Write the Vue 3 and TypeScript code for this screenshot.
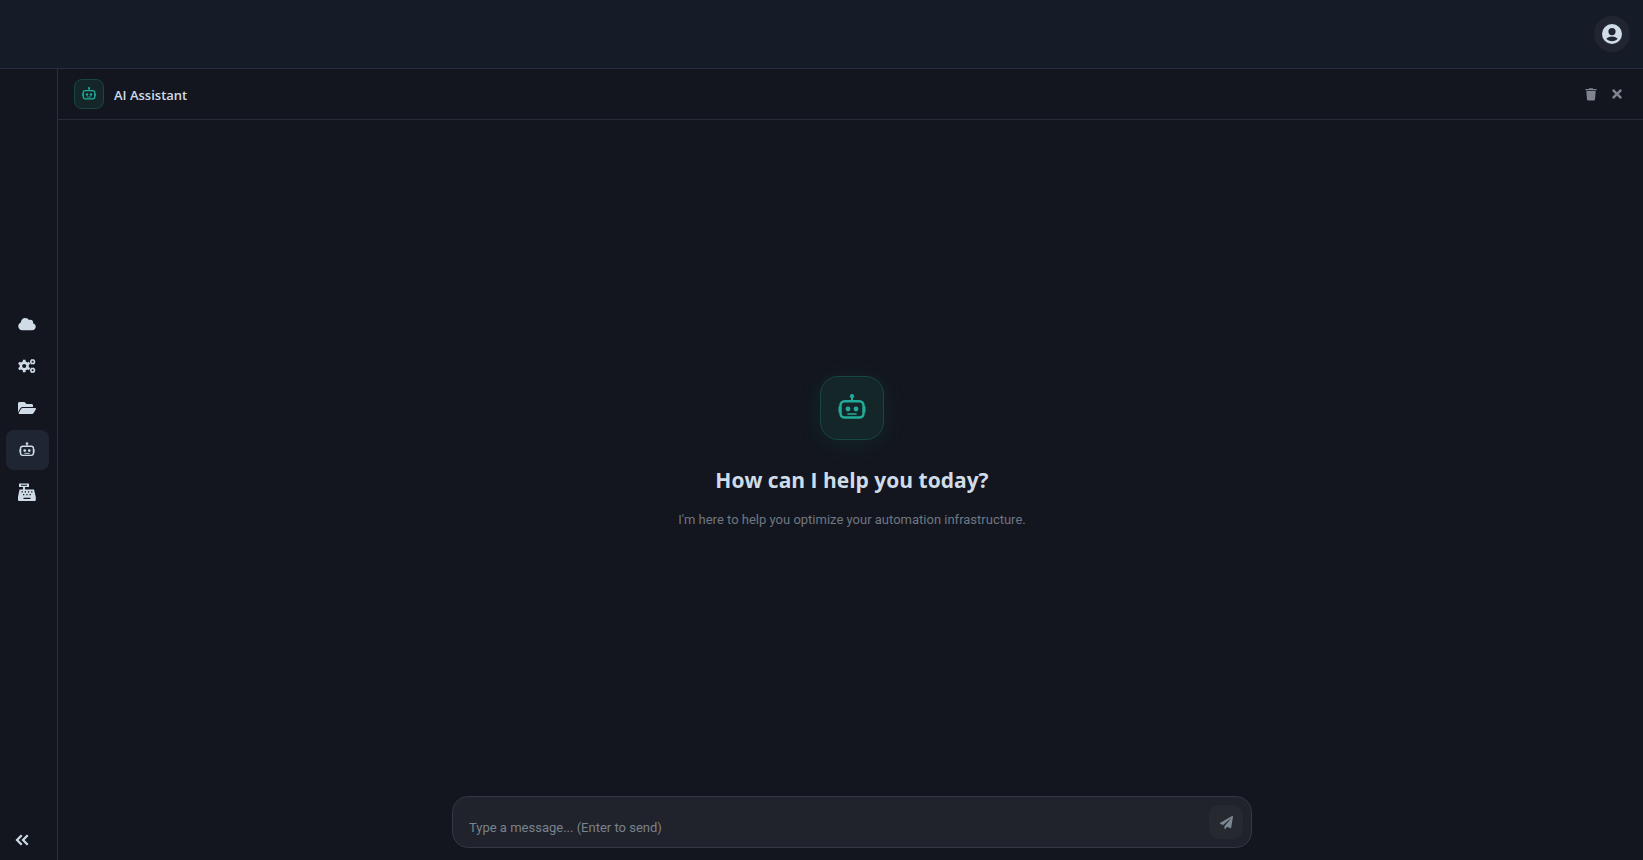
<script setup lang="ts">
import { ref } from 'vue'

type NavId = 'cloud' | 'automation' | 'files' | 'assistant' | 'terminal'

const items: { id: NavId; label: string }[] = [
  { id: 'cloud', label: 'Cloud' },
  { id: 'automation', label: 'Automation' },
  { id: 'files', label: 'Files' },
  { id: 'assistant', label: 'AI Assistant' },
  { id: 'terminal', label: 'Register' },
]

const active = ref<NavId>('assistant')
const message = ref('')

function send(): void {
  message.value = ''
}
</script>

<template>
  <div class="app">
    <svg class="defs" aria-hidden="true">
      <symbol id="robot" viewBox="0 0 32 32">
        <g fill="none" stroke="currentColor" stroke-linecap="round">
          <rect x="4.500" y="9.200" width="23" height="16.300" rx="4" stroke-width="2.500" />
          <path d="M16 9V5" stroke-width="2" />
          <path d="M12 22h8" stroke-width="1.600" />
        </g>
        <path d="M2.500 14.500h1.500v6h-1.500zM28 14.500h1.500v6H28z" fill="currentColor" />
        <circle cx="16" cy="4.200" r="2.100" fill="currentColor" />
        <circle cx="12" cy="17" r="2.400" fill="currentColor" />
        <circle cx="20" cy="17" r="2.400" fill="currentColor" />
      </symbol>
    </svg>

    <header class="topbar">
      <button class="avatar" type="button" aria-label="Account">
        <svg width="20" height="20" viewBox="0 0 20 20" aria-hidden="true">
          <path fill="currentColor" fill-rule="evenodd" d="M10 0a10 10 0 1 1 0 20 10 10 0 0 1 0-20zm0 4a3.600 3.600 0 1 0 0 7.200A3.600 3.600 0 0 0 10 4zm0 8.500c-2.500 0-5 1-5.600 2.300C5.500 16.300 7.600 17.200 10 17.200s4.500-.9 5.600-2.400c-.6-1.300-3.100-2.300-5.600-2.300z" />
        </svg>
      </button>
    </header>

    <div class="body">
      <aside class="sidebar">
        <nav class="nav" aria-label="Main">
          <button
            v-for="item in items"
            :key="item.id"
            type="button"
            class="nav-item"
            :class="{ active: active === item.id }"
            :aria-label="item.label"
            @click="active = item.id"
          >
            <svg v-if="item.id === 'cloud'" width="18" height="14" viewBox="0 0 640 512" fill="currentColor">
              <path d="M537.600 226.600c4.100-10.700 6.400-22.400 6.400-34.600 0-53-43-96-96-96-19.700 0-38.100 6-53.300 16.200C367 64.200 315.300 32 256 32c-88.400 0-160 71.600-160 160 0 2.700.1 5.400.2 8.100C40.200 219.800 0 273.200 0 336c0 79.500 64.500 144 144 144h368c70.700 0 128-57.300 128-128 0-61.900-44-113.600-102.400-125.400z" />
            </svg>
            <svg v-else-if="item.id === 'automation'" width="18" height="16" viewBox="0 0 18 16" fill="none" stroke="currentColor">
              <circle cx="6.200" cy="8" r="3.400" stroke-width="2.600" />
              <path stroke-width="2.700" d="M6.200 1.700v2.200M6.200 12.100v2.200M.75 4.850l1.900 1.100M9.750 10.050l1.900 1.100M.75 11.150l1.900-1.100M9.750 5.950l1.900-1.100" />
              <circle cx="14.600" cy="3.800" r="1.800" stroke-width="1.500" />
              <path stroke-width="1.500" d="M12 3.800h.9M16.300 3.800h.9M13.300 1.550l.4.700M15.500 5.350l.4.700M13.300 6.050l.4-.7M15.500 2.250l.4-.7" />
              <circle cx="14.600" cy="12.200" r="1.800" stroke-width="1.500" />
              <path stroke-width="1.500" d="M12 12.200h.9M16.300 12.200h.9M13.300 9.950l.4.700M15.500 13.750l.4.700M13.300 14.450l.4-.7M15.500 10.650l.4-.7" />
            </svg>
            <svg v-else-if="item.id === 'files'" width="18" height="16" viewBox="0 0 576 512" fill="currentColor">
              <path d="M572.694 292.093L500.270 416.248A63.997 63.997 0 0 1 444.989 448H45.025c-18.523 0-30.064-20.093-20.731-36.093l72.424-124.155A64 64 0 0 1 152 256h399.964c18.523 0 30.064 20.093 20.730 36.093zM152 224h328v-48c0-26.510-21.490-48-48-48H272l-64-64H48C21.490 64 0 85.490 0 112v278.046l69.077-118.418C86.214 242.250 117.989 224 152 224z" />
            </svg>
            <svg v-else-if="item.id === 'assistant'" width="18" height="18"><use href="#robot" /></svg>
            <svg v-else width="18" height="18" viewBox="0 0 18 18" fill="currentColor">
              <path fill-rule="evenodd" d="M1.500.500h9a.5.500 0 0 1 .5.500v3h-4v2.500h9l1.800 7.500v3a1 1 0 0 1-1 1H1a1 1 0 0 1-1-1v-3l1.500-7.500H5V4H1V1a.5.500 0 0 1 .5-.5zM3 1.800v.900h6v-.900zM3.500 8.300v1.200h1.300V8.300zM6.700 8.300v1.200H8V8.300zM9.900 8.300v1.200h1.300V8.300zM13.100 8.300v1.200h1.300V8.300zM5 11v1.200h1.300V11zM8.300 11v1.200h1.300V11zM11.600 11v1.200h1.300V11zM5.500 14.800V16h7v-1.200z" />
            </svg>
          </button>
        </nav>
        <button class="collapse" type="button" aria-label="Collapse sidebar">
          <svg width="14" height="12" viewBox="0 0 14 12" fill="none" stroke="currentColor" stroke-width="2.200" aria-hidden="true">
            <path d="M6.700 1.200L2 6l4.700 4.800M12.700 1.200L8 6l4.700 4.800" />
          </svg>
        </button>
      </aside>

      <main class="main">
        <div class="head">
          <span class="badge"><svg width="16" height="16" aria-hidden="true"><use href="#robot" /></svg></span>
          <h1>AI Assistant</h1>
          <div class="actions">
            <button type="button" aria-label="Clear conversation">
              <svg width="12" height="13" viewBox="0 0 12 13" aria-hidden="true">
                <path fill="currentColor" d="M.5 1h3.200L4.300.3h3.400l.6.700h3.200v1.300H.5zM1.300 3h9.400l-.7 8.600a1 1 0 0 1-1 .9H3a1 1 0 0 1-1-.9z" />
              </svg>
            </button>
            <button type="button" aria-label="Close">
              <svg width="10" height="14" viewBox="0 0 352 512" aria-hidden="true">
                <path fill="currentColor" d="M242.720 256l100.070-100.070c12.280-12.280 12.280-32.190 0-44.480l-22.240-22.240c-12.280-12.280-32.190-12.280-44.480 0L176 189.280 75.930 89.210c-12.280-12.280-32.190-12.280-44.480 0L9.210 111.450c-12.280 12.280-12.280 32.190 0 44.480L109.280 256 9.210 356.070c-12.280 12.280-12.280 32.190 0 44.480l22.240 22.240c12.280 12.280 32.200 12.280 44.480 0L176 322.720l100.070 100.070c12.280 12.280 32.200 12.280 44.480 0l22.240-22.240c12.280-12.280 12.280-32.190 0-44.480L242.720 256z" />
              </svg>
            </button>
          </div>
        </div>

        <section class="welcome">
          <span class="hero"><svg width="32" height="32" aria-hidden="true"><use href="#robot" /></svg></span>
          <h2>How can I help you today?</h2>
          <p>I'm here to help you optimize your automation infrastructure.</p>
        </section>

        <form class="composer" @submit.prevent="send">
          <div class="field">
            <textarea
              v-model="message"
              rows="1"
              aria-label="Message"
              placeholder="Type a message... (Enter to send)"
              @keydown.enter.exact.prevent="send"
            ></textarea>
            <button class="send" type="submit" aria-label="Send">
              <svg width="13" height="13" viewBox="0 0 512 512" aria-hidden="true">
                <path fill="currentColor" d="M476 3.200L12.500 270.600c-18.100 10.400-15.800 35.600 2.200 43.200L121 358.400l287.300-253.200c5.500-4.900 13.300 2.600 8.600 8.300L176 407v80.500c0 23.600 28.500 32.900 42.500 15.800L282 426l124.600 52.200c14.200 6 30.400-2.900 33-18.200l72-432C515 7.800 493.300-6.800 476 3.200z" />
              </svg>
            </button>
          </div>
        </form>
      </main>
    </div>
  </div>
</template>

<style>
body {
  margin: 0;
  background: #13161e;
}
</style>

<style scoped>
.app {
  display: flex;
  flex-direction: column;
  min-height: 100vh;
  background: #13161e;
  color: #cfdce8;
  font-family: 'Segoe UI', Roboto, 'Open Sans', sans-serif;
}

.defs {
  position: absolute;
  width: 0;
  height: 0;
}

button {
  display: flex;
  align-items: center;
  justify-content: center;
  padding: 0;
  border: 0;
  background: none;
  color: inherit;
  cursor: pointer;
}

.topbar {
  display: flex;
  align-items: center;
  justify-content: flex-end;
  height: 68px;
  padding: 0 13px;
  background: #161c27;
  border-bottom: 1px solid #262f3f;
}

.avatar {
  width: 36px;
  height: 36px;
  border-radius: 50%;
  background: #202531;
}

.body {
  display: flex;
  flex: 1;
}

.sidebar {
  display: flex;
  flex-direction: column;
  width: 57px;
  border-right: 1px solid #262f3f;
}

.nav {
  display: flex;
  flex: 1;
  flex-direction: column;
  justify-content: center;
  gap: 2px;
  padding: 0 8px 74px 6px;
}

.nav-item {
  height: 40px;
  padding-right: 2px;
  border-radius: 8px;
}

.nav-item.active {
  background: #1f2532;
}

.collapse {
  width: 44px;
  height: 40px;
}

.main {
  display: flex;
  flex: 1;
  flex-direction: column;
}

.head {
  display: flex;
  align-items: center;
  gap: 10px;
  height: 50px;
  padding: 0 14px 0 16px;
  border-bottom: 1px solid #262b38;
}

.badge,
.hero {
  display: flex;
  align-items: center;
  justify-content: center;
  box-sizing: border-box;
  border: 1px solid #17483f;
  background: #142627;
  color: #22aa9a;
}

.badge {
  width: 30px;
  height: 30px;
  border-radius: 8px;
}

h1,
h2 {
  font-family: 'Segoe UI', 'Open Sans', sans-serif;
}

h1 {
  flex: 1;
  margin: 0;
  padding-top: 2px;
  font-size: 13px;
  font-weight: 600;
  line-height: 20px;
}

.actions {
  display: flex;
  gap: 2px;
  color: #7e858e;
}

.actions button {
  width: 24px;
  height: 24px;
}

.welcome {
  display: flex;
  flex: 1;
  flex-direction: column;
  align-items: center;
  justify-content: center;
  padding: 4px 0 0 3px;
}

.hero {
  width: 64px;
  height: 64px;
  border-radius: 18px;
  box-shadow: 0 4px 24px rgba(20, 150, 120, 0.12);
}

h2 {
  margin: 24px 0 12px;
  font-size: 21px;
  font-weight: 700;
  line-height: 32px;
}

p {
  margin: 0;
  color: #6f7782;
  font-size: 13px;
  line-height: 24px;
}

.composer {
  display: flex;
  justify-content: center;
  padding: 12px 21px 12px 24px;
}

.field {
  display: flex;
  align-items: center;
  box-sizing: border-box;
  width: 100%;
  max-width: 800px;
  height: 52px;
  padding: 0 8px 0 16px;
  border: 1px solid #343842;
  border-radius: 16px;
  background: #20232b;
}

textarea {
  flex: 1;
  height: 36px;
  box-sizing: border-box;
  padding: 14px 0 0;
  border: 0;
  outline: 0;
  resize: none;
  overflow: hidden;
  background: none;
  color: #cfdce8;
  font-family: inherit;
  font-size: 13px;
  line-height: 20px;
}

textarea::placeholder {
  color: #7a828d;
  opacity: 1;
}

.send {
  width: 34px;
  height: 34px;
  border-radius: 10px;
  background: #262930;
  color: #7d8791;
}
</style>
